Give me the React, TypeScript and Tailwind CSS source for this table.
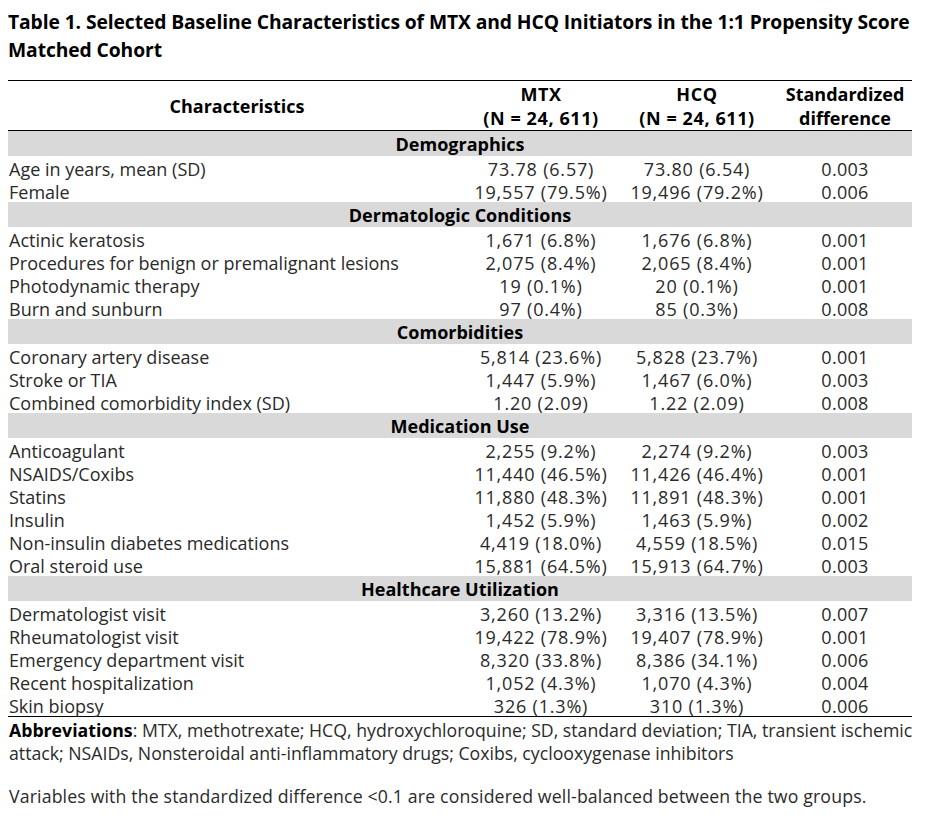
import React from "react";

type Row = { label: string; mtx: string; hcq: string; sd: string } | { section: string };

const rows: Row[] = [
  { section: "Demographics" },
  { label: "Age in years, mean (SD)", mtx: "73.78 (6.57)", hcq: "73.80 (6.54)", sd: "0.003" },
  { label: "Female", mtx: "19,557 (79.5%)", hcq: "19,496 (79.2%)", sd: "0.006" },
  { section: "Dermatologic Conditions" },
  { label: "Actinic keratosis", mtx: "1,671 (6.8%)", hcq: "1,676 (6.8%)", sd: "0.001" },
  { label: "Procedures for benign or premalignant lesions", mtx: "2,075 (8.4%)", hcq: "2,065 (8.4%)", sd: "0.001" },
  { label: "Photodynamic therapy", mtx: "19 (0.1%)", hcq: "20 (0.1%)", sd: "0.001" },
  { label: "Burn and sunburn", mtx: "97 (0.4%)", hcq: "85 (0.3%)", sd: "0.008" },
  { section: "Comorbidities" },
  { label: "Coronary artery disease", mtx: "5,814 (23.6%)", hcq: "5,828 (23.7%)", sd: "0.001" },
  { label: "Stroke or TIA", mtx: "1,447 (5.9%)", hcq: "1,467 (6.0%)", sd: "0.003" },
  { label: "Combined comorbidity index (SD)", mtx: "1.20 (2.09)", hcq: "1.22 (2.09)", sd: "0.008" },
  { section: "Medication Use" },
  { label: "Anticoagulant", mtx: "2,255 (9.2%)", hcq: "2,274 (9.2%)", sd: "0.003" },
  { label: "NSAIDS/Coxibs", mtx: "11,440 (46.5%)", hcq: "11,426 (46.4%)", sd: "0.001" },
  { label: "Statins", mtx: "11,880 (48.3%)", hcq: "11,891 (48.3%)", sd: "0.001" },
  { label: "Insulin", mtx: "1,452 (5.9%)", hcq: "1,463 (5.9%)", sd: "0.002" },
  { label: "Non-insulin diabetes medications", mtx: "4,419 (18.0%)", hcq: "4,559 (18.5%)", sd: "0.015" },
  { label: "Oral steroid use", mtx: "15,881 (64.5%)", hcq: "15,913 (64.7%)", sd: "0.003" },
  { section: "Healthcare Utilization" },
  { label: "Dermatologist visit", mtx: "3,260 (13.2%)", hcq: "3,316 (13.5%)", sd: "0.007" },
  { label: "Rheumatologist visit", mtx: "19,422 (78.9%)", hcq: "19,407 (78.9%)", sd: "0.001" },
  { label: "Emergency department visit", mtx: "8,320 (33.8%)", hcq: "8,386 (34.1%)", sd: "0.006" },
  { label: "Recent hospitalization", mtx: "1,052 (4.3%)", hcq: "1,070 (4.3%)", sd: "0.004" },
  { label: "Skin biopsy", mtx: "326 (1.3%)", hcq: "310 (1.3%)", sd: "0.006" },
];

export default function App() {
  return (
    <div
      className="w-[927px] h-[829px] bg-white px-[8px] pt-[8px] text-[#2a2a2a]"
      style={{ fontFamily: '"Open Sans", "Liberation Sans", Arial, sans-serif' }}
    >
      <h1 className="text-[19.3px] leading-[28px] font-bold text-black tracking-[-0.1px]">
        Table 1. Selected Baseline Characteristics of MTX and HCQ Initiators in the 1:1 Propensity Score Matched Cohort
      </h1>
      <div className="mt-[16px] w-[904px] border-t border-black">
        <div className="grid grid-cols-[458px_150px_162px_134px] h-[50px] items-center border-b border-black text-[18px] leading-[24px] font-bold text-black text-center">
          <div>Characteristics</div>
          <div className="tracking-[0.6px]">
            <div>MTX</div>
            <div>(N = 24, 611)</div>
          </div>
          <div className="tracking-[0.6px]">
            <div>HCQ</div>
            <div>(N = 24, 611)</div>
          </div>
          <div>
            <div>Standardized</div>
            <div>difference</div>
          </div>
        </div>
        {rows.map((r, i) =>
          "section" in r ? (
            <div
              key={i}
              className="h-[25px] pt-[2px] bg-[#d9d9d9] flex items-center justify-center text-[18px] font-bold text-black"
            >
              {r.section}
            </div>
          ) : (
            <div
              key={i}
              className="grid grid-cols-[458px_150px_162px_134px] h-[23px] pt-[3px] items-center text-[18px] leading-[20px]"
            >
              <div className="pl-[1px]">{r.label}</div>
              <div className="text-center tracking-[0.8px]">{r.mtx}</div>
              <div className="text-center tracking-[0.8px]">{r.hcq}</div>
              <div className="text-center tracking-[0.3px]">{r.sd}</div>
            </div>
          )
        )}
        <div className="border-t border-black" />
      </div>
      <div className="pl-[1px] text-[17.7px] leading-[23px] pt-[2px]">
        <p>
          <span className="font-bold text-black">Abbreviations</span>: MTX, methotrexate; HCQ, hydroxychloroquine; SD,
          standard deviation; TIA, transient ischemic attack; NSAIDs, Nonsteroidal anti-inflammatory drugs; Coxibs,
          cyclooxygenase inhibitors
        </p>
        <p className="mt-[20px] tracking-[0.15px]">
          Variables with the standardized difference &lt;0.1 are considered well-balanced between the two groups.
        </p>
      </div>
    </div>
  );
}
